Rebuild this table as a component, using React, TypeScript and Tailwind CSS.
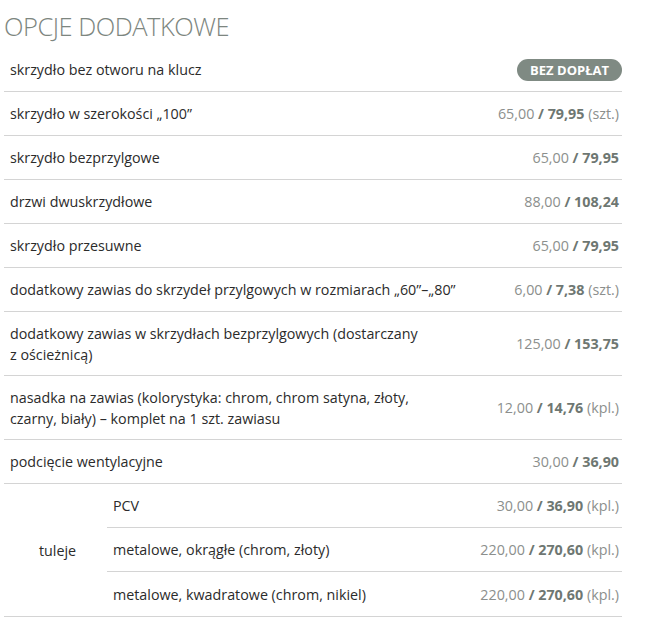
import React from "react";

type Row = { label: React.ReactNode; net?: string; gross?: string; unit?: string; badge?: boolean; tall?: boolean };

const Price = ({ net, gross, unit }: { net: string; gross: string; unit?: string }) => (
  <span className="whitespace-nowrap text-[#8c8f8d]">
    {net}
    <span className="font-bold text-[#6e7772]"> / {gross}</span>
    {unit ? <span> ({unit})</span> : null}
  </span>
);

const rows: Row[] = [
  { label: "skrzydło bez otworu na klucz", badge: true },
  { label: "skrzydło w szerokości „100”", net: "65,00", gross: "79,95", unit: "szt." },
  { label: "skrzydło bezprzylgowe", net: "65,00", gross: "79,95" },
  { label: "drzwi dwuskrzydłowe", net: "88,00", gross: "108,24" },
  { label: "skrzydło przesuwne", net: "65,00", gross: "79,95" },
  { label: "dodatkowy zawias do skrzydeł przylgowych w rozmiarach „60”–„80”", net: "6,00", gross: "7,38", unit: "szt." },
  {
    label: (
      <>
        dodatkowy zawias w skrzydłach bezprzylgowych (dostarczany
        <br />z ościeżnicą)
      </>
    ),
    net: "125,00",
    gross: "153,75",
    tall: true,
  },
  {
    label: (
      <>
        nasadka na zawias (kolorystyka: chrom, chrom satyna, złoty,
        <br />
        czarny, biały) – komplet na 1 szt. zawiasu
      </>
    ),
    net: "12,00",
    gross: "14,76",
    unit: "kpl.",
    tall: true,
  },
  { label: "podcięcie wentylacyjne", net: "30,00", gross: "36,90" },
];

const sub = [
  { label: "PCV", net: "30,00", gross: "36,90", unit: "kpl." },
  { label: "metalowe, okrągłe (chrom, złoty)", net: "220,00", gross: "270,60", unit: "kpl." },
  { label: "metalowe, kwadratowe (chrom, nikiel)", net: "220,00", gross: "270,60", unit: "kpl." },
];

export default function App() {
  return (
    <div
      className="w-[646px] h-[622px] bg-white text-[#2b2b2b] overflow-hidden"
      style={{ fontFamily: '"Open Sans", "Noto Sans", sans-serif' }}
    >
      <div className="pl-[4px] pr-[24px] pt-[8px]">
        <h1 className="text-[25.5px] font-light text-[#7d8680] leading-[36px] tracking-[-0.5px] mb-[4px]">OPCJE DODATKOWE</h1>
        <div className="text-[14.3px] leading-[21px]">
          {rows.map((r, i) => (
            <div
              key={i}
              className={`flex items-center justify-between border-b border-[#d4d4d4] pl-[6px] pr-[3px] ${r.tall ? "h-[64px]" : "h-[44px]"}`}
            >
              <div>{r.label}</div>
              {r.badge ? (
                <span className="mr-[-3px] rounded-full bg-[#7f8a83] px-[13px] text-[13px] font-bold leading-[22px] text-white">
                  BEZ DOPŁAT
                </span>
              ) : (
                <Price net={r.net!} gross={r.gross!} unit={r.unit} />
              )}
            </div>
          ))}
          <div className="flex border-b border-[#d4d4d4]">
            <div className="w-[103px] flex items-center justify-center pl-[4px]">tuleje</div>
            <div className="flex-1">
              {sub.map((s, i) => (
                <div
                  key={i}
                  className={`flex h-[44px] items-center justify-between pl-[6px] pr-[3px] ${i < 2 ? "border-b border-[#d4d4d4]" : ""}`}
                >
                  <div>{s.label}</div>
                  <Price net={s.net} gross={s.gross} unit={s.unit} />
                </div>
              ))}
            </div>
          </div>
        </div>
      </div>
    </div>
  );
}
